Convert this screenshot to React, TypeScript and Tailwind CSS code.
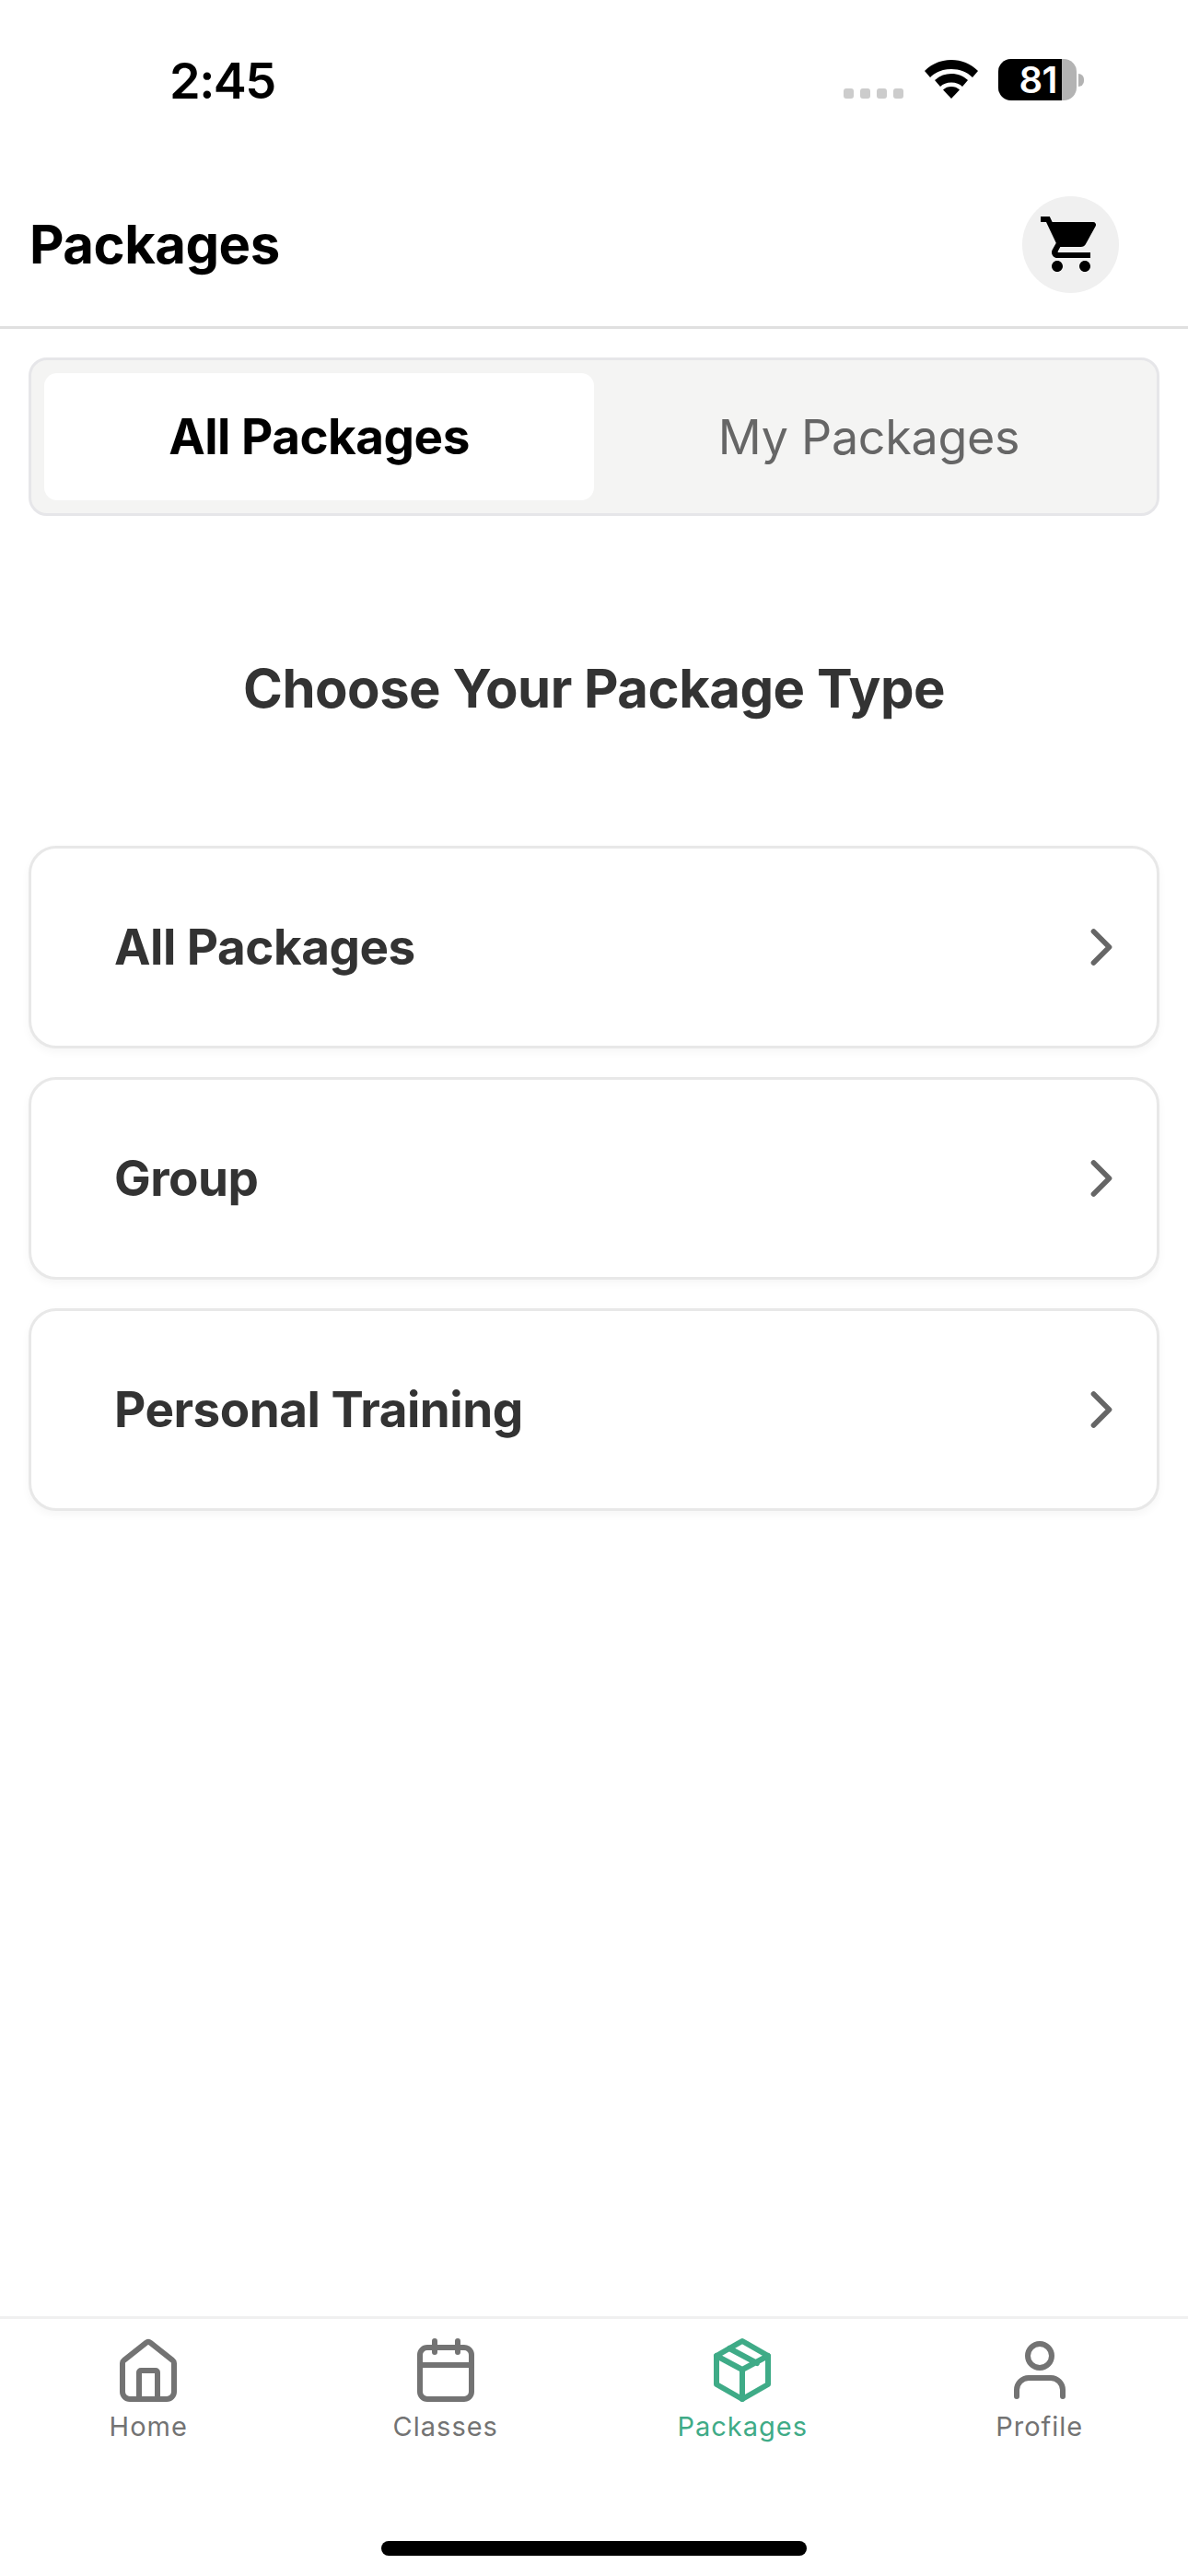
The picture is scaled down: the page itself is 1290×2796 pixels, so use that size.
import { ChevronRight } from "lucide-react";
import { MdShoppingCart } from "react-icons/md";

const packageTypes = ["All Packages", "Group", "Personal Training"];

function HomeIcon() {
  return (
    <svg width="72" height="72" viewBox="0 0 72 72" fill="none" stroke="currentColor" strokeWidth="6" strokeLinejoin="round" strokeLinecap="round">
      <path d="M8 29a4 4 0 0 1 1.600-3.200L33.600 6.800a4 4 0 0 1 4.800 0l24 19a4 4 0 0 1 1.600 3.200V60a8 8 0 0 1-8 8H16a8 8 0 0 1-8-8z" />
      <path d="M26 68V39a2 2 0 0 1 2-2h16a2 2 0 0 1 2 2v29" />
    </svg>
  );
}

function CalendarIcon() {
  return (
    <svg width="72" height="72" viewBox="0 0 72 72" fill="none" stroke="currentColor" strokeWidth="6" strokeLinejoin="round" strokeLinecap="round">
      <rect x="8" y="12" width="56" height="56" rx="8" />
      <path d="M8 31h56M24 5v12M49 5v12" />
    </svg>
  );
}

function BoxIcon() {
  return (
    <svg width="72" height="72" viewBox="0 0 72 72" fill="none" stroke="currentColor" strokeWidth="6" strokeLinejoin="round" strokeLinecap="round">
      <path d="M36 5l28 16v31L36 68 8 52V21z" />
      <path d="M8 21l28 15 28-15M36 36v32M22 13l30 16" />
    </svg>
  );
}

function UserIcon() {
  return (
    <svg width="72" height="72" viewBox="0 0 72 72" fill="none" stroke="currentColor" strokeWidth="6" strokeLinejoin="round" strokeLinecap="round">
      <circle cx="36" cy="21" r="13" />
      <path d="M11 65v-7a13 13 0 0 1 13-13h24a13 13 0 0 1 13 13v7" />
    </svg>
  );
}

function WifiIcon() {
  return (
    <svg width="58" height="42" viewBox="0 0 58 42" fill="currentColor">
      <path d="M29 0C18 0 8 4 0 12l6 7c6-6 14-9 23-9s17 3 23 9l6-7C50 4 40 0 29 0z" />
      <path d="M29 15c-7 0-13 2.500-18 7l6 7c3-3 7-4.500 12-4.500s9 1.500 12 4.500l6-7c-5-4.500-11-7-18-7z" />
      <path d="M29 29c-3.500 0-6.500 1-9 3.500L29 42l9-9.500C35.500 30 32.500 29 29 29z" />
    </svg>
  );
}

function NavItem({ label, active, children }: { label: string; active?: boolean; children: React.ReactNode }) {
  return (
    <div className={`flex flex-col items-center ${active ? "text-[#3fab87]" : "text-[#737373]"}`}>
      {children}
      <span className="mt-[6px] text-[29px] leading-[40px] tracking-[1px]">{label}</span>
    </div>
  );
}

export default function App() {
  return (
    <div className="flex h-[2796px] w-[1290px] flex-col bg-white font-['Inter',sans-serif]">
      {/* status bar */}
      <div className="flex h-[175px] items-start justify-between pt-[65px] pr-[113px] pl-[184px] text-black">
        <span className="text-[54px] leading-[46px] font-semibold tracking-[-1.500px]">2:45</span>
        <div className="flex items-start">
          <div className="mt-[31px] mr-[23px] flex gap-[7px]">
            <span className="size-[11px] rounded-[3px] bg-[#cccccc]" />
            <span className="size-[11px] rounded-[3px] bg-[#cccccc]" />
            <span className="size-[11px] rounded-[3px] bg-[#cccccc]" />
            <span className="size-[11px] rounded-[3px] bg-[#cccccc]" />
          </div>
          <div className="mr-[22px]">
            <WifiIcon />
          </div>
          <div className="-mt-px flex items-center">
            <div className="flex h-[45px] w-[85px] rounded-[14px] bg-[#b3b3b3]">
              <div className="flex h-full w-[69px] items-center justify-end rounded-l-[14px] bg-black pr-[5px] text-[40px] leading-none font-semibold tracking-[-0.5px] text-white">
                81
              </div>
            </div>
            <div className="ml-[2px] h-[14px] w-[6px] rounded-r-full bg-[#b3b3b3]" />
          </div>
        </div>
      </div>

      {/* header */}
      <div className="flex h-[182px] items-center justify-between border-b-[3px] border-[#e0e0e0] pr-[75px] pl-[32px]">
        <h1 className="mt-[2px] text-[58px] font-bold tracking-[-0.5px] text-black">Packages</h1>
        <div className="mt-px flex size-[105px] items-center justify-center rounded-full bg-[#f0f0f0]">
          <MdShoppingCart className="size-[72px] text-black" />
        </div>
      </div>

      {/* tabs */}
      <div className="mx-[31px] mt-[31px] flex h-[172px] rounded-[20px] border-[3px] border-[#e6e6e9] bg-[#f4f4f3] p-[14px]">
        <div className="flex flex-1 items-center justify-center rounded-[14px] bg-white pt-[2px] text-[53px] font-bold tracking-[-0.5px] text-black">All Packages</div>
        <div className="flex flex-1 items-center justify-center pt-[2px] text-[52px] font-normal tracking-[-0.3px] text-[#666666]">My Packages</div>
      </div>

      <h2 className="mt-[149px] text-center text-[58px] leading-[76px] font-bold tracking-[-0.5px] text-[#333333]">Choose Your Package Type</h2>

      {/* package type cards */}
      <div className="mx-[31px] mt-[133px] flex flex-col gap-[31px]">
        {packageTypes.map((name) => (
          <div
            key={name}
            className="flex h-[220px] items-center justify-between rounded-[30px] border-[3px] border-[#e8e8e8] bg-white pr-[26px] pl-[90px] shadow-[0_4px_10px_rgba(0,0,0,0.04)]"
          >
            <span className="pt-[2px] text-[53px] font-bold tracking-[-0.5px] text-[#333333]">{name}</span>
            <ChevronRight className="size-[68px] text-[#666666]" strokeWidth={2} />
          </div>
        ))}
      </div>

      {/* bottom nav */}
      <div className="mt-auto grid h-[282px] grid-cols-4 border-t-[3px] border-[#f0f0f0] pt-[19px]">
        <NavItem label="Home"><HomeIcon /></NavItem>
        <NavItem label="Classes"><CalendarIcon /></NavItem>
        <NavItem label="Packages" active><BoxIcon /></NavItem>
        <NavItem label="Profile"><UserIcon /></NavItem>
      </div>

      {/* home indicator */}
      <div className="relative">
        <div className="absolute bottom-[22px] left-[414px] h-[16px] w-[462px] rounded-full bg-black" />
      </div>
    </div>
  );
}
